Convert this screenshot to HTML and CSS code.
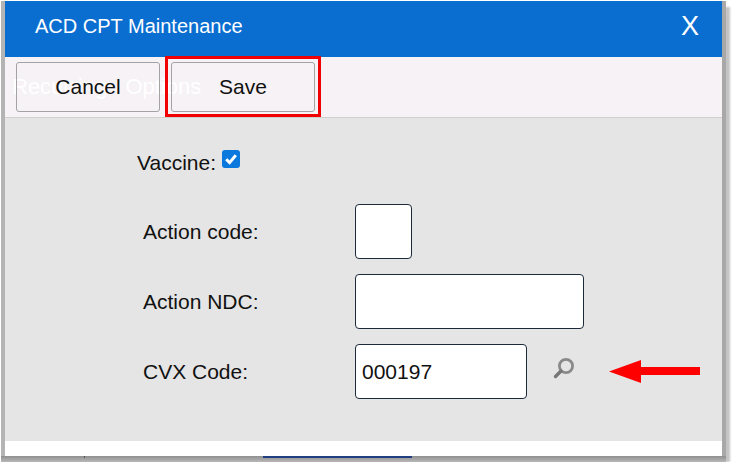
FILE: index.html
```html
<!DOCTYPE html>
<html lang="en">
<head>
    <meta charset="UTF-8">
    <title>ACD CPT Maintenance</title>
    <link rel="stylesheet" href="styles.css">
</head>
<body>
    <div class="dialog">
        <div class="title-bar">
            <span class="title">ACD CPT Maintenance</span>
            <span class="close">X</span>
        </div>
        <div class="toolbar">
            <span class="ghost-text">Recurring Options</span>
            <button class="tool-button">Cancel</button>
            <button class="tool-button highlighted">Save</button>
        </div>
        <div class="form-area">
            <div class="vaccine-row">
                <span>Vaccine:</span>
                <span class="checkbox">
                    <svg width="14" height="14" viewBox="0 0 14 14"><path d="M2.2 7.2 5.6 10.6 11.8 3.2" fill="none" stroke="#fff" stroke-width="3"/></svg>
                </span>
            </div>
            <div class="form-row row-code">
                <label>Action code:</label>
                <input class="field field-code" type="text">
            </div>
            <div class="form-row row-ndc">
                <label>Action NDC:</label>
                <input class="field field-ndc" type="text">
            </div>
            <div class="form-row row-cvx">
                <label>CVX Code:</label>
                <input class="field field-cvx" type="text" value="000197">
                <svg class="search-icon" width="26" height="26" viewBox="0 0 26 26">
                    <circle cx="15" cy="10" r="6.6" fill="none" stroke="#8a8a8a" stroke-width="2.8"/>
                    <path d="M10 15 4.5 20.5" stroke="#777" stroke-width="3.4" stroke-linecap="round"/>
                </svg>
            </div>
            <svg class="red-arrow" width="92" height="25" viewBox="0 0 92 25">
                <path d="M1 12.5 33 1V8H92V16H33V24Z" fill="#ff0000"/>
            </svg>
        </div>
        <div class="dialog-footer"></div>
    </div>
    <div class="shadow-strip">
        <span class="tick"></span>
        <span class="blue-bar"></span>
    </div>
</body>
</html>
```
FILE: styles.css
```css
body {
    margin: 0;
    background: #fff;
    font-family: "Liberation Sans", Arial, sans-serif;
    color: #111;
    overflow: hidden;
}
.dialog {
    width: 717px;
    margin: 1px 0 0 1px;
    border-left: 4px solid #b4b4b4;
    border-right: 4px solid #a8a8a8;
    position: relative;
    box-shadow: 4px 6px 2px #c4c4c4;
}
.title-bar {
    height: 56px;
    background: #0a6ed1;
    color: #fff;
    display: flex;
    justify-content: space-between;
    align-items: center;
    padding: 0 23px 0 30px;
}
.title {
    font-size: 20px;
    margin-top: -5px;
}
.close {
    font-size: 27px;
    margin-top: -5px;
}
.toolbar {
    height: 55px;
    background: #f6f2f6;
    border-bottom: 1px solid #cfcfcf;
    display: flex;
    gap: 11px;
    padding: 5px 0 0 11px;
    position: relative;
}
.ghost-text {
    position: absolute;
    left: 7px;
    top: 17px;
    color: #fff;
    font-size: 22px;
    word-spacing: 12px;
    white-space: nowrap;
}
.tool-button {
    width: 144px;
    height: 50px;
    background: transparent;
    border: 1px solid #a3a3a3;
    border-radius: 3px;
    font-family: inherit;
    font-size: 21px;
    color: #111;
    position: relative;
}
/* red annotation box round the button */
.highlighted::after {
    content: "";
    position: absolute;
    left: -7px;
    top: -7px;
    right: -7px;
    bottom: -6px;
    border: 3px solid #f00000;
}
.form-area {
    height: 323px;
    background: #e5e5e5;
    font-size: 21px;
    position: relative;
    box-sizing: border-box;
    padding-top: 33px;
}
.vaccine-row {
    display: flex;
    gap: 6px;
    align-items: flex-start;
    margin-left: 132px;
    height: 53px;
    line-height: 23px;
}
.checkbox {
    width: 18px;
    height: 18px;
    margin-top: -1px;
    background: #0a78dc;
    border-radius: 3px;
    display: flex;
    align-items: center;
    justify-content: center;
}
.form-row {
    display: flex;
    align-items: center;
    margin-left: 138px;
}
.form-row label {
    width: 212px;
}
.row-code {
    margin-bottom: 15px;
}
.row-ndc {
    margin-bottom: 15px;
}
.field {
    height: 55px;
    box-sizing: border-box;
    background: #fff;
    border: 1px solid #1c2a3a;
    border-radius: 4px;
    padding: 0 6px;
    font-family: inherit;
    font-size: 21px;
    color: #111;
}
.field-code {
    width: 57px;
}
.field-ndc {
    width: 229px;
}
.field-cvx {
    width: 172px;
}
.search-icon {
    margin: -6px 0 0 24px;
}
.red-arrow {
    position: absolute;
    left: 603px;
    top: 241px;
}
.dialog-footer {
    height: 15px;
    background: #fff;
}
.shadow-strip {
    width: 725px;
    height: 6px;
    margin-left: 1px;
    background: linear-gradient(#8f8f8f, #b8b8b8);
    position: relative;
}
.tick {
    position: absolute;
    left: 83px;
    top: 0;
    width: 1px;
    height: 2px;
    background: #555;
}
.blue-bar {
    position: absolute;
    left: 262px;
    top: 0;
    width: 149px;
    height: 2px;
    background: #1f3f80;
}
```
